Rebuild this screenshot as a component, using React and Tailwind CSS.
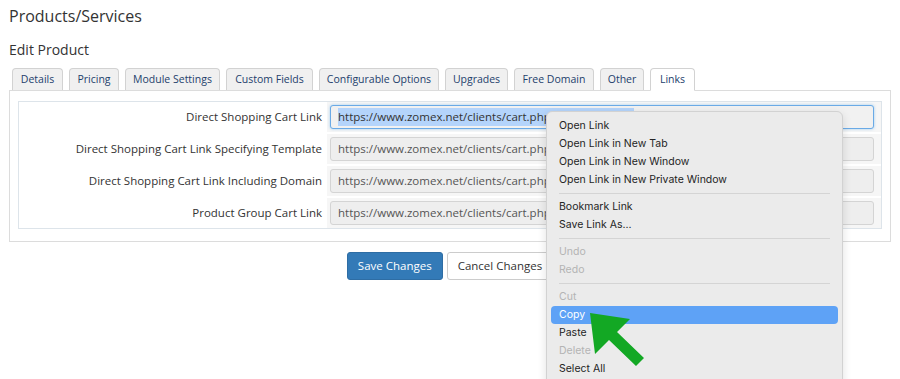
// Page produit WHMCS : onglet Links avec menu contextuel ouvert
const tabs = [
  { label: "Details", w: 51 },
  { label: "Pricing", w: 50 },
  { label: "Module Settings", w: 95 },
  { label: "Custom Fields", w: 87 },
  { label: "Configurable Options", w: 120 },
  { label: "Upgrades", w: 63 },
  { label: "Free Domain", w: 80 },
  { label: "Other", w: 44 },
  { label: "Links", w: 45, active: true },
];

const rows = [
  "Direct Shopping Cart Link",
  "Direct Shopping Cart Link Specifying Template",
  "Direct Shopping Cart Link Including Domain",
  "Product Group Cart Link",
];

const menu = [
  ["Open Link"],
  ["Open Link in New Tab"],
  ["Open Link in New Window"],
  ["Open Link in New Private Window"],
  null,
  ["Bookmark Link"],
  ["Save Link As..."],
  null,
  ["Undo", "off"],
  ["Redo", "off"],
  null,
  ["Cut", "off"],
  ["Copy", "hi"],
  ["Paste"],
  ["Delete", "off"],
  ["Select All"],
];

function ContextMenu() {
  return (
    <div
      className="absolute left-[546px] top-[111px] w-[297px] h-[290px] bg-[#ebebeb] border border-[#d2d2d2] rounded-[6px] shadow-[0_3px_10px_rgba(0,0,0,0.12)] pt-[5px] px-[4px]"
      style={{ fontFamily: "Inter, 'Noto Sans', sans-serif" }}
    >
      {menu.map((item, i) =>
        item === null ? (
          <div key={i} className="h-[9px] flex items-center px-[8px]">
            <div className="h-px w-full bg-[#d4d4d4]" />
          </div>
        ) : (
          <div
            key={i}
            className={
              "h-[18px] flex items-center pl-[8px] text-[10.5px] rounded-[4px] " +
              (item[1] === "hi"
                ? "bg-[#5ea2f6] text-white"
                : item[1] === "off"
                ? "text-[#b4b4b4]"
                : "text-[#242424]")
            }
          >
            {item[0]}
          </div>
        )
      )}
    </div>
  );
}

function Arrow() {
  return (
    <svg className="absolute left-0 top-0" width="900" height="379" viewBox="0 0 900 379">
      <polygon
        points="590,313 630,319 617,332 644,358 636,366 609,340 595,354"
        fill="#13a824"
      />
    </svg>
  );
}

export default function App() {
  return (
    <div
      className="relative w-[900px] h-[379px] overflow-hidden bg-white text-[#333]"
      style={{ fontFamily: "'Open Sans', 'Liberation Sans', sans-serif" }}
    >
      <div className="px-[9px] pt-[4px]">
        <h1 className="text-[16px] leading-[24px]">Products/Services</h1>
        <h2 className="text-[14px] leading-[20px] mt-[12px]">Edit Product</h2>

        {/* onglets */}
        <div className="flex gap-[6px] pl-[3px] mt-[8px] relative z-[1]">
          {tabs.map((t) => (
            <div
              key={t.label}
              style={{ width: t.w }}
              className={
                "flex items-center justify-center text-[10.5px] border border-[#d2d2d2] rounded-t-[4px] text-[#23406c] " +
                (t.active ? "h-[23px] bg-white border-b-white" : "h-[22px] bg-[#f0f0f0] border-b-0")
              }
            >
              {t.label}
            </div>
          ))}
        </div>

        {/* panneau */}
        <div className="-mt-px border border-[#dcdcdc] px-[8px] pt-[10px] pb-[12px]">
          <div className="border border-[#dde4ea] flex flex-col gap-[2px] bg-white">
            {rows.map((r, i) => (
              <div key={r} className="flex h-[30px]">
                <div className="w-[308px] flex items-center justify-end pr-[5px] text-[11.5px] text-[#333]">
                  {r}
                </div>
                <div className="flex-1 flex items-center bg-[#f6f6f6] pl-[3px] pr-[7px]">
                  <div
                    className={
                      "w-full h-[24px] flex items-center px-[7px] rounded-[3px] text-[11.5px] text-[#555] whitespace-nowrap overflow-hidden " +
                      (i === 0
                        ? "bg-[#f1f1f1] border border-[#6aaae6] shadow-[0_0_3px_rgba(102,175,233,0.6)]"
                        : "bg-[#eeeeee] border border-[#d4d4d4]")
                    }
                  >
                    {i === 0 ? (
                      <span className="bg-[#b4d4fb] text-[#333]">https://www.zomex.net/clients/cart.php?a=add&pid=12</span>
                    ) : (
                      "https://www.zomex.net/clients/cart.php?a=add&pid=12"
                    )}
                  </div>
                </div>
              </div>
            ))}
          </div>
        </div>

        {/* boutons */}
        <div className="flex justify-center gap-[4px] mt-[10px]">
          <button className="h-[28px] px-[10px] rounded-[3px] bg-[#337ab7] border border-[#2e6da4] text-white text-[11.5px]">
            Save Changes
          </button>
          <button className="h-[28px] px-[10px] rounded-[3px] bg-white border border-[#cccccc] text-[#333] text-[11.5px]">
            Cancel Changes
          </button>
        </div>
      </div>

      <ContextMenu />
      <Arrow />
    </div>
  );
}
